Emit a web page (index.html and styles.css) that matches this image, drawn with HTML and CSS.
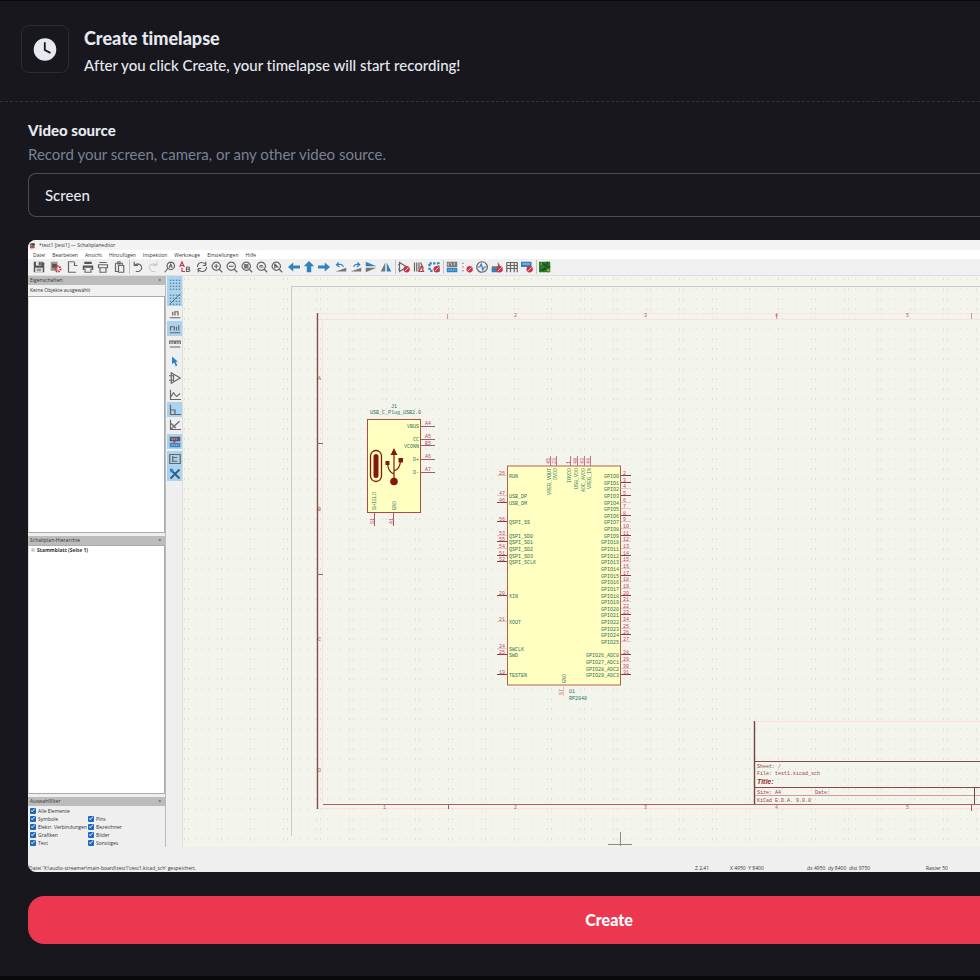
FILE: index.html
```html
<!DOCTYPE html>
<html lang="en">
<head>
<meta charset="utf-8">
<title>Create timelapse</title>
<link rel="stylesheet" href="styles.css">
</head>
<body>
<main class="dialog">
  <header class="dialog-head">
    <div class="head-icon">
      <svg width="24" height="24" viewBox="0 0 24 24" aria-hidden="true"><circle cx="12" cy="12.5" r="11.3" fill="#e6e9f0"/><path d="M11.800 6v7l5 2.600" fill="none" stroke="#17171d" stroke-width="1.800" stroke-linecap="round"/></svg>
    </div>
    <div>
      <h1>Create timelapse</h1>
      <p>After you click Create, your timelapse will start recording!</p>
    </div>
  </header>
  <form class="dialog-body">
    <label class="field-label" for="source">Video source</label>
    <p class="field-hint">Record your screen, camera, or any other video source.</p>
    <select id="source" class="source"><option>Screen</option></select>

    <section class="preview">
      <div class="titlebar">
        <svg class="logo" viewBox="0 0 16 16"><path d="M2 3h11v11H2z" fill="#8a8178"/><path d="M4 4l7-2 3 4-5 3z" fill="#4b4a4a"/><path d="M3 10l7-1 3 4-8 2z" fill="#c04a3c"/></svg>
        *test1 [test1] — Schaltplaneditor
      </div>
      <nav class="menubar"><span>Datei</span><span>Bearbeiten</span><span>Ansicht</span><span>Hinzufügen</span><span>Inspektion</span><span>Werkzeuge</span><span>Einstellungen</span><span>Hilfe</span></nav>
      <div class="toolbar" id="toolbar"></div>
      <div class="workspace">
        <div class="panels">
          <div class="panel-title">Eigenschaften<span>×</span></div>
          <div class="panel-note">Keine Objekte ausgewählt</div>
          <div class="panel-list props"></div>
          <div class="panel-title">Schaltplan-Hierarchie<span>×</span></div>
          <div class="panel-list tree"><i></i>Stammblatt (Seite 1)</div>
          <div class="panel-title">Auswahlfilter<span>×</span></div>
          <div class="filters">
            <label class="wide"><input type="checkbox" checked>Alle Elemente</label>
            <label><input type="checkbox" checked>Symbole</label><label><input type="checkbox" checked>Pins</label>
            <label><input type="checkbox" checked>Elektr. Verbindungen</label><label><input type="checkbox" checked>Bezeichner</label>
            <label><input type="checkbox" checked>Grafiken</label><label><input type="checkbox" checked>Bilder</label>
            <label><input type="checkbox" checked>Text</label><label><input type="checkbox" checked>Sonstiges</label>
          </div>
        </div>
        <div class="sidebar" id="sidebar"></div>
        <svg class="canvas" aria-label="Schematic">
          <defs>
            <pattern id="dots" width="33" height="10" patternUnits="userSpaceOnUse">
              <path d="M1 3h1M5 3h1" stroke="#c8cbc1"/><path d="M12 3h1M18 3h1M25 3h1" stroke="#dddfd6"/><path d="M1 6h1M5 6h1" stroke="#e6e8df"/>
            </pattern>
          </defs>
          <rect width="100%" height="100%" fill="#f3f4ec"/>
          <rect width="100%" height="100%" fill="url(#dots)"/>
          <g transform="translate(-183 -276)">
            <path d="M291.500 836V286.500H1300" fill="none" stroke="#c9cac5"/>
            <path d="M318 313.500H1300M318 319.500H1300M322.500 320V803M318 808.500H1300" fill="none" stroke="#fbe1db"/>
            <path d="M317.500 313V809" stroke="#80504f" stroke-width="1.400"/>
            <path d="M323 804.500H1300" stroke="#b35d5d"/>
            <path d="M317 443.500h6M317 574.500h6M448.500 804v5M971.500 804v7" stroke="#a55a5a"/>
            <path d="M447.500 314v5M776.500 314v5M971.500 313v6" stroke="#cf9a96"/>
            <g class="frame">
              <text x="514" y="317">2</text><text x="644" y="317">3</text><text x="775" y="317">4</text><text x="906" y="317">5</text>
              <text x="383" y="809">1</text><text x="514" y="809">2</text><text x="644" y="809">3</text><text x="775" y="809">4</text><text x="906" y="809">5</text>
              <text x="318" y="380">A</text><text x="318" y="511">B</text><text x="318" y="641">C</text><text x="318" y="772">D</text>
            </g>
            <path d="M754.500 721V804" stroke="#6f4546" stroke-width="1.400"/>
            <path d="M755 761.500H1300M755 787.500H1300" stroke="#8a4a4c"/>
            <path d="M755 795.500H1300" stroke="#d59a96"/><path d="M974.500 788v16" stroke="#6f4546"/>
            <path d="M755 721.500H1300" stroke="#fbe1db"/>
            <g class="block">
              <text x="757" y="768">Sheet: /</text><text x="757" y="775">File: test1.kicad_sch</text>
              <text class="block-title" x="757" y="784">Title:</text>
              <text x="757" y="794">Size: A4</text><text x="815" y="794">Date:</text><text x="757" y="802">KiCad E.D.A. 9.0.0</text>
            </g>
            <path d="M608 844.500h24M620.500 832v14" stroke="#8b8b86"/>

            <rect x="367.500" y="419.500" width="53" height="93" fill="#ffffc2" stroke="#a8503f"/>
            <rect x="370.500" y="450.500" width="11" height="31" rx="5.500" fill="none" stroke="#84180c" stroke-width="1.300"/>
            <rect x="373.500" y="454" width="5" height="24" rx="2.500" fill="#84180c"/>
            <g fill="none" stroke="#84180c" stroke-width="1.200"><path d="M394 481v-27M394 474q-6-2-6.500-11M394 471q6-2 6.500-10"/></g>
            <path d="M394 448l3.500 7h-7zM385.500 461h4v4h-4zM398.500 458h4.500v4.500h-4.500z" fill="#84180c"/><circle cx="394" cy="481.500" r="3.800" fill="#84180c"/>
            <g class="pin-name">
              <text x="391" y="408">J1</text><text x="370" y="414">USB_C_Plug_USB2.0</text>
              <g text-anchor="end"><text x="419" y="428">VBUS</text><text x="419" y="441">CC</text><text x="419" y="448">VCONN</text><text x="419" y="461">D+</text><text x="419" y="474">D-</text></g>
              <text transform="translate(376 510) rotate(-90)">SHIELD</text><text transform="translate(396 510) rotate(-90)">GND</text>
            </g>
            <path d="M421 426.500h14M421 439.500h14M421 445.500h14M421 459.500h14M421 472.500h14M374.500 513v13M393.500 513v13" stroke="#a85a64"/>
            <g class="pin-number"><text x="425" y="425">A4</text><text x="425" y="438">A5</text><text x="425" y="445">B5</text><text x="425" y="458">A6</text><text x="425" y="471">A7</text><text transform="translate(374 524) rotate(-90)">S1</text><text transform="translate(393 524) rotate(-90)">A1</text></g>

            <rect x="507.500" y="466" width="113" height="219" fill="#ffffc2" stroke="#b3604f"/>
            <g id="chip"></g>
            <g class="pin-name"><text x="569" y="693">U1</text><text x="569" y="700">RP2040</text></g>
          </g>
        </svg>
      </div>
      <footer class="status"><span class="file">Datei 'X:\audio-streamer\main-board\test1\test1.kicad_sch' gespeichert.</span><span class="zoom">Z 2,41</span><span class="pos">X 4950  Y 8400</span><span class="delta">dx 4950  dy 8400  dist 9750</span><span>Raster 50</span></footer>
    </section>

    <button class="create" type="button">Create</button>
  </form>
</main>
<script src="script.js"></script>
</body>
</html>
```
FILE: styles.css
```css
* { box-sizing: border-box; }
html { background: #09090d; }
body { margin: 0; padding-top: 1px; font-family: Lato, "Liberation Sans", sans-serif; font-feature-settings: "liga" 0, "dlig" 0; color: #e6e9f0; }
h1, p { margin: 0; }
.dialog { background: #17171d; padding-bottom: 32px; }
.dialog-head { display: flex; align-items: flex-start; gap: 15px; padding: 24px 21px; height: 101px; border-bottom: 1px dashed #32333a; }
.head-icon { display: flex; align-items: center; justify-content: center; width: 48px; height: 48px; border: 1px solid #2a2b33; border-radius: 8px; }
.dialog-head h1 { font-size: 18px; line-height: 26px; font-weight: 900; }
.dialog-head p { font-size: 15px; line-height: 28px; font-weight: 500; }
.dialog-body { display: flex; flex-direction: column; padding: 16px 0 0 28px; }
.field-label { font-size: 15px; line-height: 24px; font-weight: 900; }
.field-hint { font-size: 15px; line-height: 24px; color: #7b8192; margin-bottom: 7px; }
.source { appearance: none; height: 44px; padding: 0 16px; border: 1px solid #4b4c53; border-right: 0; border-radius: 8px 0 0 8px; background: #17171d; color: #e6e9f0; font: 500 15px Lato, "Liberation Sans", sans-serif; }
.create { margin-top: 24px; height: 48px; padding: 0 0 2px 210px; border: 0; border-radius: 16px 0 0 16px; background: #ec3750; color: #fff; font: 900 16px Lato, "Liberation Sans", sans-serif; }

.preview { margin-top: 23px; border-radius: 8px 0 0 8px; overflow: hidden; background: #efefef; color: #333; font: 5px/8px "Open Sans", "Noto Sans", sans-serif; }
.titlebar { display: flex; align-items: center; gap: 3px; height: 10px; padding-left: 1px; background: #f3f3f3; }
.logo { width: 7px; height: 7px; }
.menubar { display: flex; align-items: center; gap: 7px; height: 9px; padding-left: 5px; background: #fff; }
.toolbar { display: flex; align-items: center; gap: 2px; height: 17px; padding-left: 3px; background: #f0f0f0; border-bottom: 1px solid #dfe0dc; }
.group { display: flex; }
.group + .ruled { border-left: 1px solid #c4c4c4; }
.tool { display: flex; align-items: center; justify-content: center; width: 15px; height: 14px; padding: 0; border: 0; background: none; }
.tool svg { width: 12px; height: 12px; }
.workspace { display: grid; grid-template-columns: 138px 17px 1fr; height: 571px; }
.panels { display: flex; flex-direction: column; border-right: 1px solid #bbb; }
.panel-title { display: flex; justify-content: space-between; height: 9px; padding: 0 4px 0 2px; background: #bcbcbc; }
.panel-note { height: 11px; padding: 1px 2px; background: #f0f0f0; }
.panel-list { background: #fff; border: 1px solid #aaa; border-left-color: #ddd; margin-bottom: 3px; }
.props { height: 237px; }
.tree { height: 249px; padding: 0 2px; font-weight: 700; }
.tree i { display: inline-block; width: 4px; height: 4px; margin-right: 2px; border-radius: 2px; background: #ccc; }
.filters { display: grid; grid-template-columns: 58px 1fr; padding: 1px 2px 0; }
.filters label { display: flex; align-items: center; gap: 2px; height: 8px; white-space: nowrap; }
.wide { grid-column: 1 / 3; }
.filters input { appearance: none; width: 6px; height: 6px; margin: 0; border-radius: 1px; background: #1f68b8; }
.filters input:checked::after { content: ""; display: block; width: 3px; height: 1px; margin: 1px; border: solid #b8d6f2; border-width: 0 0 1px 1px; transform: rotate(-45deg); }
.sidebar { display: flex; flex-direction: column; gap: 2px; padding: 0 0 0 1px; border-right: 1px solid #ddd; }
.sidebar .tool { height: 15px; }
.sidebar .on { background: #abd2ee; }
.canvas { display: block; width: 100%; height: 571px; }
.frame, .block { font-family: "Liberation Mono", monospace; font-size: 5px; fill: #b0605c; }
.block { fill: #99474b; }
.block-title { font-size: 7px; font-weight: 700; font-style: italic; fill: #8f2f33; font-family: "Liberation Sans", sans-serif; }
.pin-name { font-family: "Liberation Mono", monospace; font-size: 5px; fill: #2d7263; }
.pin-number { font-family: "Liberation Mono", monospace; font-size: 5px; fill: #c0485c; }
.status { display: flex; align-items: flex-end; height: 25px; padding-left: 1px; white-space: pre; }
.file { width: 666px; }
.zoom { width: 35px; }
.pos { width: 77px; }
.delta { width: 119px; }
```
FILE: script.js
```javascript
const grey = (d) => `<path d="${d}" fill="none" stroke="#666" stroke-width="1.6"/>`;
const blue = (d) => `<path d="${d}" fill="#2f82bd"/>`;
const fillGrey = (d) => `<path d="${d}" fill="#777"/>`;
const no = '<circle cx="11.500" cy="11" r="4.200" fill="#ce3548"/><path d="M9 13.500l5-5" stroke="#f5d0d4" stroke-width="1.300"/>';
const lens = grey('M11 11l4 4M7 1.500a5.500 5.500 0 1 0 .1 0');

const icons = {
  save: '<path d="M1 1h12l2 2v12H1z" fill="#555"/><path d="M4 1h7v5H4zM3 9h10v6H3z" fill="#e8e8e8"/><path d="M8 2h2v3H8zM5 11h6M5 13h6" fill="#555" stroke="#555"/>',
  setup: '<path d="M1 1h9v12H1z" fill="#9a9488"/><path d="M3 4h6v5H3z" fill="#574f48"/><circle cx="10.500" cy="10.500" r="3.500" fill="none" stroke="#cb3447" stroke-width="2.600" stroke-dasharray="2 1"/>',
  page: grey('M9 1H2v14h10M10 1v5h4'),
  print: '<path d="M3 1h10v3H3zM1 6h14v6h-2V9H3v3H1z" fill="#555"/>' + grey('M4 10v5h8v-5'),
  plot: grey('M2 5h12v4H2zM4 9v6h8V9M3 2h10'),
  paste: grey('M2 3v11h4M2 3h9v3M6 6h7v9H6zM5 1h3v3H5z'),
  undo: grey('M3 1v5h5M3 6q5-4 9 0q3 5-3 8H5'),
  redo: '<path d="M13 1v5H8M13 6Q8 2 4 6q-3 5 3 8h4" fill="none" stroke="#ccc" stroke-width="1.600"/>',
  find: grey('M5 10l-4 5M9 1.500a5 5 0 1 0 .1 0M7 9l2-5 2 5M8 7h3'),
  replace: '<path d="M1 8l3-7 3 7M2 6h4M4 9v5h4" fill="none" stroke="#cb3447" stroke-width="1.500"/>' + grey('M10 8v6h3q3-2 0-3h-3M10 8h3q2 1 0 3'),
  refresh: grey('M2 8q0-6 6-6q3 0 5 3M13 1v5H9M14 8q0 6-6 6q-3 0-5-3M3 15v-5h4'),
  zin: lens + grey('M4 7h6M7 4v6'),
  zout: lens + grey('M4 7h6'),
  zfit: lens + fillGrey('M4 4h6v6H4z'),
  zobj: lens + grey('M4 8h6M5 6h4'),
  zsel: lens + grey('M5 4v6M5 4l4 4H5'),
  left: blue('M0 8l7-6v4h9v4H7v4z'), up: blue('M8 0l7 7h-4v8H5V7H1z'), right: blue('M16 8L9 2v4H0v4h9v4z'),
  ccw: '<path d="M11 8Q10 3 3 5M5 2L2 5l4 3" fill="none" stroke="#2f82bd" stroke-width="1.600"/>' + fillGrey('M1 14h14V9z'),
  cw: '<path d="M5 8q1-5 8-3M10 2l3 3-4 3" fill="none" stroke="#2f82bd" stroke-width="1.600"/>' + fillGrey('M1 14h14V9z'),
  flipv: blue('M1 1l14 6H1z') + fillGrey('M1 15l14-6H1z'),
  fliph: fillGrey('M1 14L7 2v12z') + blue('M15 14L9 2v12z'),
  sym: grey('M2 1v14M2 2l10 6-10 6M0 5h2M0 11h2') + no,
  lib: grey('M2 2v12M5 2v12M8 2v12M10 2l4 8') + '<path d="M8 14l3-7 3 7z" fill="none" stroke="#cb3447" stroke-width="1.600"/>',
  foot: '<path d="M2 3h12v10H2z" fill="none" stroke="#2f82bd" stroke-width="3" stroke-dasharray="3 2"/>' + no,
  annot: '<path d="M1 1h14v7H1z" fill="#777"/><path d="M3 2v5M6 2l2 4M11 2v4" stroke="#eee"/><path d="M1 9h14v6H1z" fill="#2f82bd"/><path d="M3 12h10" stroke="#def" stroke-dasharray="2 1"/>',
  erc: '<path d="M1 3h3M1 8h3M1 13h3" stroke="#999" stroke-width="1.500"/>' + no,
  sim: grey('M8 1a7 7 0 1 0 .1 0') + '<path d="M2 8h3l2-4 2 8 2-4h3" fill="none" stroke="#2f82bd" stroke-width="1.600"/>',
  assign: fillGrey('M1 7h8V1l5 8v5H1z') + blue('M1 10h9v5H1z') + no,
  table: grey('M1 2h14v13M1 2v13M1 6h14M6 2v13M11 2v13M1 10h14'),
  bom: blue('M0 1h14v7H0z') + '<path d="M2 4h10" stroke="#def"/>' + no,
  pcb: '<path d="M0 1h15v14H0z" fill="#287b2b"/><path d="M2 4h5l3 4h5M2 12h4l3-3M11 1v4M12 11v4" fill="none" stroke="#173f18" stroke-width="1.500"/><path d="M11 11h3v3h-3zM2 3h2v2H2z" fill="#bdb04a"/>',
  grid: '<path d="M1 3h14M1 7h14M1 11h14M1 15h14" stroke="#4b6c86" stroke-width="1.500" stroke-dasharray="2 2"/>',
  gridoff: '<path d="M1 3h14M1 7h14M1 11h14M1 15h14" stroke="#4b6c86" stroke-width="1.500" stroke-dasharray="2 2"/><path d="M1 15L15 1" stroke="#456"/>',
  inch: grey('M1 13h14M5 5v5M8 10V5h4v5'), mil: grey('M1 13h14M2 10V5h5v5M10 5v5M13 3v7'), mm: grey('M1 12h14M1 8V4h6v4M4 4v4M9 8V4h6v4M12 4v4'),
  cursor: blue('M4 2l8 7H9l2 5-2 1-2-5-3 2z'),
  amp: grey('M3 1l12 7-12 7zM0 5h6M0 11h6M6 4v8'),
  curve: grey('M2 1v13h14M2 11l4-6 4 5 5-4'), ortho: grey('M2 1v13h14M2 8h6v6'), diag: grey('M2 1v13h14M2 14L14 3M3 6l6 6'),
  ann: '<path d="M1 1h14v6H1z" fill="#556"/><path d="M1 9h14v6H1z" fill="#3f83bd"/><path d="M3 4h9M3 12h10" stroke="#def" stroke-dasharray="2 1"/><path d="M6 9l4-4" stroke="#cb3447" stroke-width="2"/>',
  tree: grey('M1 2h14v12H1zM5 4v8M5 6h6M5 11h6'),
  tools: '<path d="M2 2l12 12M14 2L2 14" stroke="#315e82" stroke-width="2.500"/><path d="M1 1h4l1 4-4 1z" fill="#2f82bd"/>'
};

const button = (name, on) =>
  `<button type="button" class="tool${on ? ' on' : ''}" aria-label="${name}"><svg viewBox="0 0 16 16">${icons[name]}</svg></button>`;

const groups = [
  'save', 'setup', 'page print plot', 'paste', '|undo redo', 'find replace', 'refresh zin zout zfit zobj zsel',
  'left up right', 'ccw cw flipv fliph', '|sym lib foot', '|annot erc sim assign table bom', '|pcb'
];
document.getElementById('toolbar').innerHTML = groups.map((g) =>
  `<div class="group${g[0] === '|' ? ' ruled' : ''}">${g.replace('|', '').split(' ').map((n) => button(n)).join('')}</div>`).join('');

const active = ['grid', 'gridoff', 'mil', 'ortho', 'ann', 'tree', 'tools'];
document.getElementById('sidebar').innerHTML =
  ['grid gridoff inch mil mm', 'cursor', 'amp', 'curve ortho diag', 'ann', 'tree tools']
    .map((g) => `<div>${g.split(' ').map((n) => button(n, active.includes(n))).join('')}</div>`).join('');

/* Pins of the microcontroller, one row every 6.64 units from the top pin. */
const rowY = (row) => Math.round(476 + row * 6.64);
const pin = (x, y, dark) => `<path d="M${x} ${y - 0.5}h10" stroke="${dark ? '#8c3a48' : '#eec3c3'}"/>`;
let out = '';
const right = [];
for (let i = 0; i < 26; i++) right.push([i, 'GPIO' + i]);
for (let i = 26; i < 30; i++) right.push([i + 1, `GPIO${i}_ADC${i - 26}`]);
right.forEach(([row, name], i) => {
  const y = rowY(row);
  out += `<text class="pin-name" text-anchor="end" x="619" y="${y + 2}">${name}</text>` + pin(621, y, row % 3 === 0 || row === 1) +
    `<text class="pin-number" x="623" y="${y - 1}">${i + 2}</text>`;
});
[[0, 'RUN', 26], [3, 'USB_DP', 47], [4, 'USB_DM', 46], [7, 'QSPI_SS', 56], [9, 'QSPI_SD0', 53], [10, 'QSPI_SD1', 55],
 [11, 'QSPI_SD2', 54], [12, 'QSPI_SD3', 51], [13, 'QSPI_SCLK', 52], [18, 'XIN', 20], [22, 'XOUT', 21],
 [26, 'SWCLK', 24], [27, 'SWD', 25], [30, 'TESTEN', 19]].forEach(([row, name, num]) => {
  const y = rowY(row);
  out += `<text class="pin-name" x="509" y="${y + 2}">${name}</text>` + pin(497, y, ![0, 3, 9, 11, 22, 26].includes(row)) +
    `<text class="pin-number" x="499" y="${y - 1}">${num}</text>`;
});
[[551, 'VREG_VOUT', 45], [557, 'DVDD', 23], [571, 'IOVDD', 1], [578, 'USB_VDD', 48], [585, 'ADC_AVDD', 43], [591, 'VREG_IN', 44]].forEach(([x, name, num]) => {
  out += `<text class="pin-name" text-anchor="end" transform="translate(${x} 468) rotate(-90)">${name}</text>` +
    `<path d="M${x - 0.5} 456v10" stroke="#bf7680"/><text class="pin-number" transform="translate(${x - 1} 464) rotate(-90)">${num}</text>`;
});
out += '<text class="pin-name" transform="translate(566 683) rotate(-90)">GND</text><path d="M563.500 686v10" stroke="#eec3c3"/><text class="pin-number" transform="translate(563 695) rotate(-90)">57</text>';
document.getElementById('chip').innerHTML = out;
```
